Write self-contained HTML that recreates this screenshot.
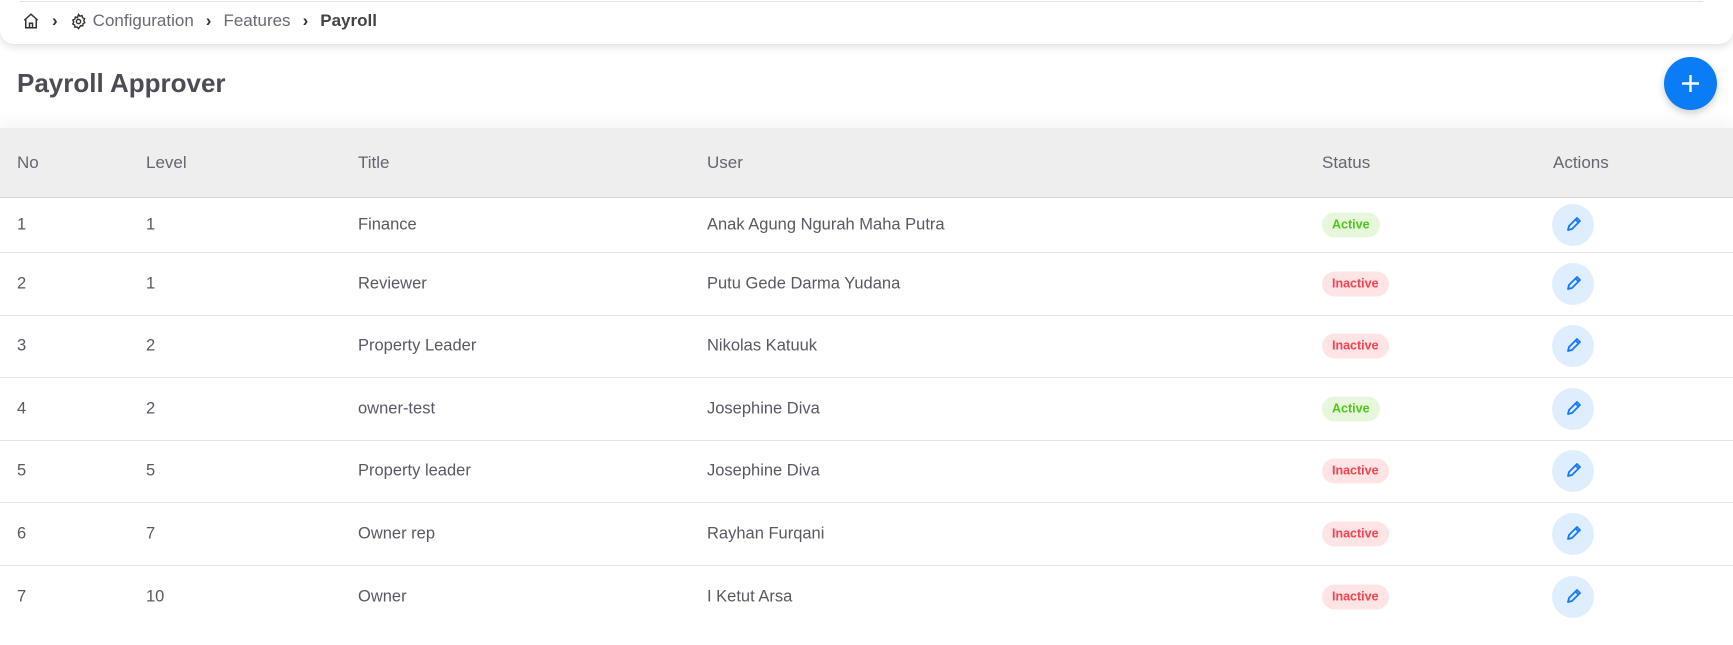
<!DOCTYPE html>
<html><head><meta charset="utf-8"><style>
*{box-sizing:border-box;margin:0;padding:0}
body{width:1733px;height:645px;overflow:hidden;background:#fff;font-family:"Liberation Sans",sans-serif;color:#5a5862;position:relative}
.topline{position:absolute;left:20px;right:30px;top:1px;height:1px;background:#e4e4e4}
.bc{position:absolute;left:0;top:0;width:1733px;height:44px;border-radius:0 0 14px 14px;box-shadow:0 3px 8px rgba(0,0,0,.12);background:#fff}
.bct{position:absolute;top:11px;left:22px;font-size:17px;color:#6a6872;display:flex;align-items:center;height:20px}
.bct .sep{margin:0 12px;font-size:17px;color:#333;font-weight:bold}
.title{position:absolute;left:17px;top:68px;font-size:26px;font-weight:bold;color:#4d4b55}
.plus{position:absolute;left:1664px;top:57px;width:53px;height:53px;border-radius:50%;background:#0a7cf5;box-shadow:0 3px 8px rgba(0,0,0,.2)}
.hdr{position:absolute;left:0;top:128px;width:1733px;height:70px;background:#eeeeee;border-bottom:1px solid #d6d6d6;box-shadow:0 -8px 14px rgba(0,0,0,.04)}
.cell{position:absolute;font-size:16.5px;white-space:nowrap}
.hdr .cell{top:25px;font-size:17px;color:#66646e}
.row{position:absolute;left:0;width:1733px;border-bottom:1px solid #e3e3e3}
.row .cell{top:50%;transform:translateY(-50%)}
.badge{position:absolute;left:1322px;top:50%;transform:translateY(-50%);height:25px;border-radius:13px;font-size:12.5px;font-weight:bold;line-height:25px;padding:0 10px}
.act{background:#e6f7dc;color:#52c41a}
.ina{background:#ffe4e6;color:#f5424f}
.edit{position:absolute;left:1552px;top:50%;transform:translateY(-50%);width:42px;height:42px;border-radius:50%;background:#dfeefe}
</style></head><body>
<div class="bc"></div>
<div class="topline"></div>
<div class="bct">
<svg width="18" height="18" viewBox="0 0 24 24" fill="none" stroke="#333" stroke-width="2"><path d="M3 11L12 3l9 8M5 9v12h14V9M10 21v-6h4v6"/></svg>
<span class="sep">›</span>
<svg width="17" height="17" viewBox="0 0 24 24" fill="none" stroke="#333" stroke-width="2"><circle cx="12" cy="12" r="3"/><path d="M12 2l2 2.5 3-.8.8 3 2.7 1.3-1 2.9 1.5 2.6-2.6 1.5-.3 3-3-.2L12 22l-2-2.3-3 .3-.4-3-2.7-1.5 1.4-2.7-1.3-2.8 2.8-1.3.8-3 3 .8z"/></svg>
<span style="margin-left:6px">Configuration</span><span class="sep">›</span><span>Features</span><span class="sep">›</span><span style="font-weight:bold;color:#444">Payroll</span>
</div>
<div class="title">Payroll Approver</div>
<div class="plus"><svg width="53" height="53" viewBox="0 0 53 53"><path d="M26.5 18v17M18 26.5h17" stroke="#fff" stroke-width="2.4"/></svg></div>
<div class="hdr">
<div class="cell" style="left:17px">No</div><div class="cell" style="left:146px">Level</div><div class="cell" style="left:358px">Title</div><div class="cell" style="left:707px">User</div><div class="cell" style="left:1322px">Status</div><div class="cell" style="left:1553px">Actions</div>
</div>
<div id="rows"></div>
<script>
var d=[["1","1","Finance","Anak Agung Ngurah Maha Putra",1],["2","1","Reviewer","Putu Gede Darma Yudana",0],["3","2","Property Leader","Nikolas Katuuk",0],["4","2","owner-test","Josephine Diva",1],["5","5","Property leader","Josephine Diva",0],["6","7","Owner rep","Rayhan Furqani",0],["7","10","Owner","I Ketut Arsa",0]];
var tops=[197,253,315.5,378,440.5,503,565.5,628],h="";
var pen='<svg width="42" height="42" viewBox="0 0 42 42" fill="none" stroke="#1677ff" stroke-width="1.8" stroke-linejoin="round"><path d="M16 26l1-4 8-8 3 3-8 8z M23.5 15.5l3 3"/></svg>';
d.forEach(function(r,i){var t=tops[i],ht=tops[i+1]-t;
h+='<div class="row" style="top:'+t+'px;height:'+ht+'px'+(i==6?';border-bottom:none':'')+'"><div class="cell" style="left:17px">'+r[0]+'</div><div class="cell" style="left:146px">'+r[1]+'</div><div class="cell" style="left:358px">'+r[2]+'</div><div class="cell" style="left:707px">'+r[3]+'</div>'+(r[4]?'<div class="badge act">Active</div>':'<div class="badge ina">Inactive</div>')+'<div class="edit">'+pen+'</div></div>';});
document.getElementById("rows").innerHTML=h;
</script>
</body></html>
